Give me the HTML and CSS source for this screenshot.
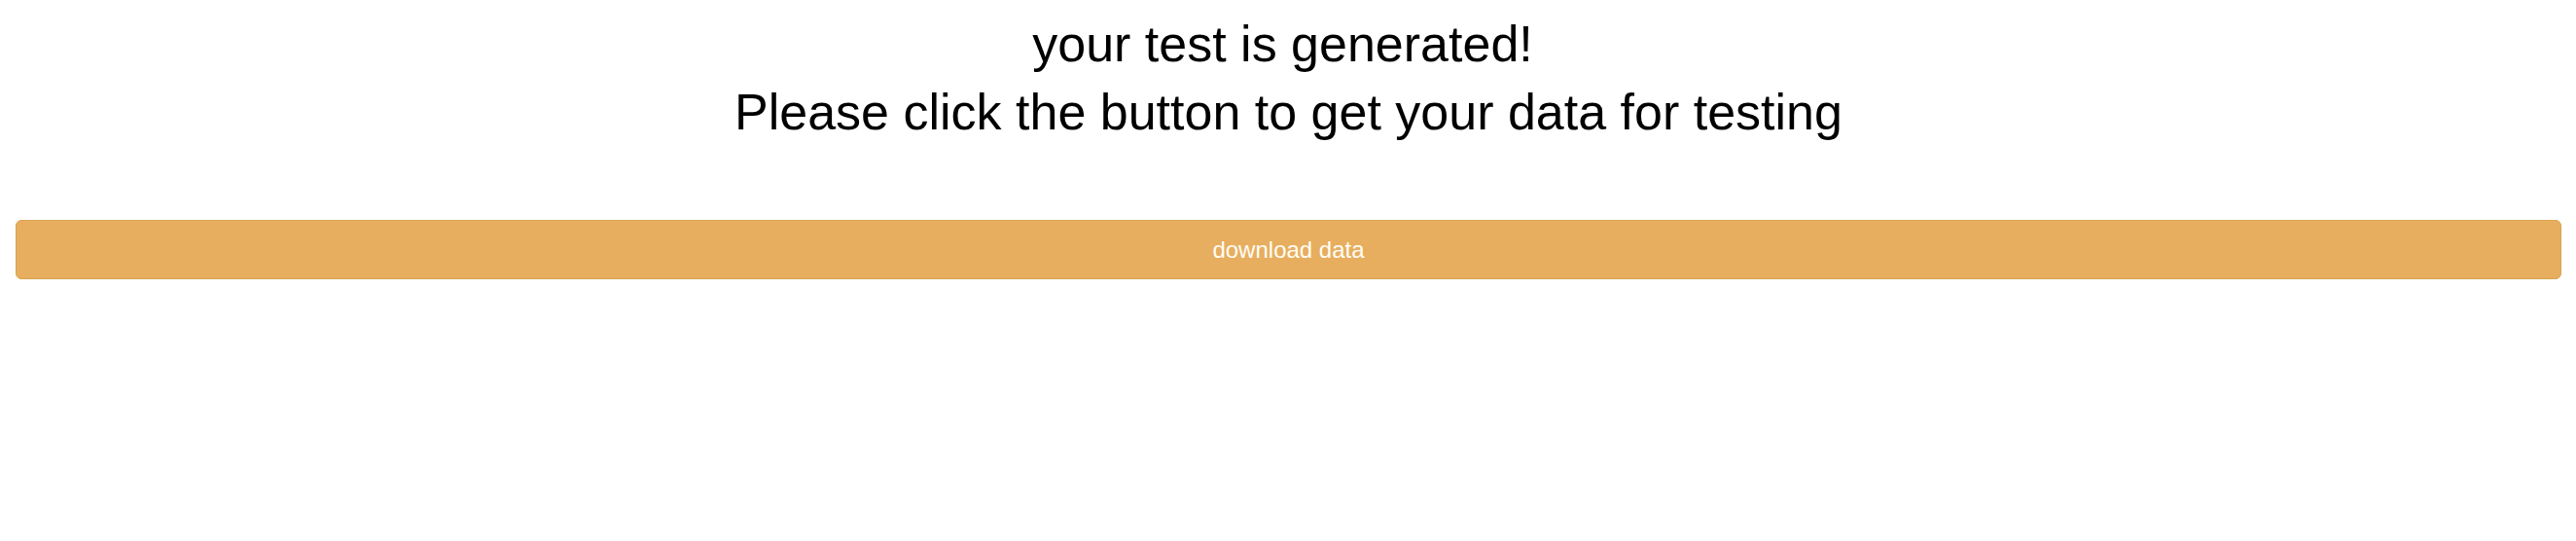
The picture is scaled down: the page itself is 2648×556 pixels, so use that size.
FILE: index.html
```html
<!DOCTYPE html>
<html lang="en">
<head>
<meta charset="utf-8">
<title>Test generated</title>
<link rel="stylesheet" href="styles.css">
</head>
<body>
<main class="page">
  <header class="heading">
    <h2 class="heading-line heading-first">your test is generated!</h2>
    <h2 class="heading-line">Please click the button to get your data for testing</h2>
  </header>
  <button class="download-btn" type="button">download data</button>
</main>
</body>
</html>
```
FILE: styles.css
```css
html, body {
  margin: 0;
  padding: 0;
  background: #ffffff;
}

.page {
  display: flex;
  flex-direction: column;
  padding: 10px 15px 0 16px;
  font-family: "Liberation Sans", Arial, Helvetica, sans-serif;
}

.heading {
  display: flex;
  flex-direction: column;
  align-items: center;
}

.heading-line {
  margin: 0;
  font-size: 52px;
  font-weight: normal;
  line-height: 70px;
  color: #000000;
  text-align: center;
}

.heading-first {
  padding-right: 12px;
}

.download-btn {
  margin-top: 76px;
  height: 61px;
  width: 100%;
  display: flex;
  align-items: center;
  justify-content: center;
  background: #e7ae5f;
  border: 1px solid #d9a14f;
  border-radius: 6px;
  color: #fffdf5;
  font-family: "Liberation Sans", Arial, Helvetica, sans-serif;
  font-size: 24px;
  cursor: pointer;
  padding: 0;
}
```
